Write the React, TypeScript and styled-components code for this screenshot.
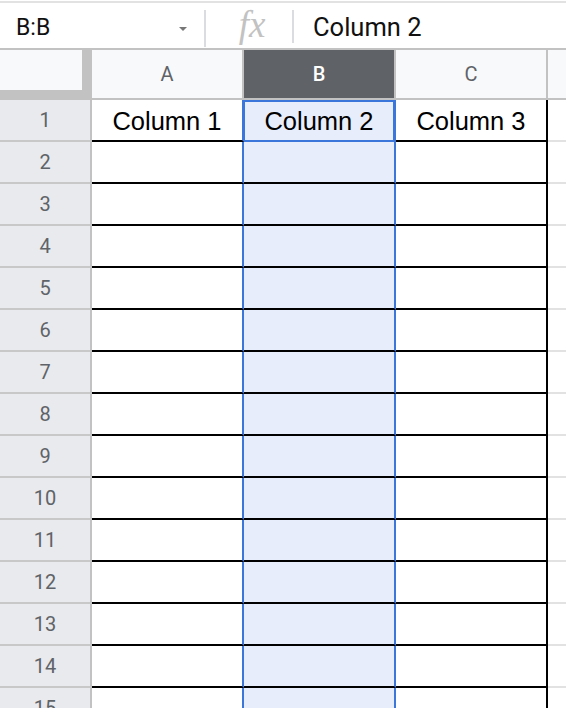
import styled, { createGlobalStyle } from 'styled-components';
import { Fragment } from 'react';

const GlobalStyle = createGlobalStyle`
  html, body {
    margin: 0;
    padding: 0;
    background: #fff;
    overflow: hidden;
  }
  body {
    font-family: Roboto, "Liberation Sans", Arial, sans-serif;
  }
`

const BLUE = '#3b77db';
const GRID_GRAY = '#c2c2c2';

const Page = styled.div`
  width: 566px;
  height: 708px;
  overflow: hidden;
`

const FormulaBar = styled.div`
  margin-top: 1px;
  height: 45px;
  border-top: 2px solid #e2e2e2;
  border-bottom: 2px solid ${GRID_GRAY};
  display: flex;
  align-items: stretch;
`

const NameBox = styled.div`
  width: 204px;
  box-sizing: border-box;
  padding: 4px 17px 0 16px;
  display: flex;
  align-items: center;
  font-size: 23px;
  color: #111;
`

const Caret = styled.span`
  margin-left: auto;
  margin-top: 2px;
  width: 0;
  height: 0;
  border-left: 4px solid transparent;
  border-right: 4px solid transparent;
  border-top: 4px solid #777;
`

const Divider = styled.div<{ $bottom: number }>`
  width: 2px;
  background: #dadce0;
  margin: 7px 0 ${p => p.$bottom}px 0;
`

const FxBox = styled.div`
  width: 86px;
  display: flex;
  align-items: center;
  justify-content: center;
  padding: 0 0 2px 6px;
  box-sizing: border-box;
  font-family: "Liberation Serif", "DejaVu Serif", serif;
  font-style: italic;
  font-size: 37px;
  color: #c2c2c2;
`

const FormulaText = styled.div`
  padding: 2px 0 0 19px;
  display: flex;
  align-items: center;
  font-size: 25.5px;
  color: #111;
`

const Sheet = styled.div`
  display: grid;
  grid-template-columns: 92px 152px 152px 152px 1fr;
  grid-template-rows: 50px;
  grid-auto-rows: 42px;
`

const Corner = styled.div`
  box-sizing: border-box;
  background: #f8f9fa;
  border-right: 10px solid ${GRID_GRAY};
  border-bottom: 10px solid ${GRID_GRAY};
`

const ColHeader = styled.div<{ $selected?: boolean }>`
  box-sizing: border-box;
  display: flex;
  align-items: center;
  justify-content: center;
  background: ${p => (p.$selected ? '#5f6368' : '#f8f9fa')};
  color: ${p => (p.$selected ? '#fff' : '#5f6368')};
  font-weight: ${p => (p.$selected ? 500 : 400)};
  font-size: 20px;
  border-right: 2px solid ${GRID_GRAY};
  border-bottom: 2px solid ${GRID_GRAY};
`

const RowHeader = styled.div`
  box-sizing: border-box;
  display: flex;
  align-items: center;
  justify-content: center;
  background: #e8eaed;
  color: #5f6368;
  font-size: 20px;
  border-right: 2px solid ${GRID_GRAY};
  border-bottom: 2px solid #c8c8c8;
`

const Cell = styled.div<{ $edge: string; $selected?: boolean; $active?: boolean }>`
  box-sizing: border-box;
  display: flex;
  align-items: center;
  justify-content: center;
  padding-top: 2px;
  font-family: "Liberation Sans", Arial, sans-serif;
  font-size: 25.5px;
  color: #000;
  background: ${p => (p.$selected ? '#e8edfb' : '#fff')};
  border-right: 2px solid ${p => p.$edge};
  border-bottom: 2px solid ${p => (p.$active ? BLUE : '#000')};
  box-shadow: ${p => (p.$active ? `inset 0 2px 0 ${BLUE}, inset 1px 0 0 ${BLUE}, inset -1px 0 0 ${BLUE}` : 'none')};
`

const Filler = styled.div<{ $header?: boolean }>`
  box-sizing: border-box;
  background: ${p => (p.$header ? '#f8f9fa' : '#fff')};
  border-bottom: 2px solid ${p => (p.$header ? GRID_GRAY : '#e2e2e2')};
`

const columns = ['A', 'B', 'C'];
const header = ['Column 1', 'Column 2', 'Column 3'];
const rows = Array.from({ length: 15 }, (_, i) => i + 1);

export default function App() {
  return (
    <Page>
      <GlobalStyle />
      <FormulaBar>
        <NameBox>
          B:B
          <Caret />
        </NameBox>
        <Divider $bottom={1} />
        <FxBox>fx</FxBox>
        <Divider $bottom={5} />
        <FormulaText>Column 2</FormulaText>
      </FormulaBar>

      <Sheet>
        <Corner />
        {columns.map(c => (
          <ColHeader key={c} $selected={c === 'B'}>{c}</ColHeader>
        ))}
        <Filler $header />

        {rows.map(r => (
          <Fragment key={r}>
            <RowHeader>{r}</RowHeader>
            {columns.map((c, i) => (
              <Cell
                key={c}
                $edge={i < 2 ? BLUE : '#000'}
                $selected={c === 'B'}
                $active={c === 'B' && r === 1}
              >
                {r === 1 ? header[i] : ''}
              </Cell>
            ))}
            <Filler />
          </Fragment>
        ))}
      </Sheet>
    </Page>
  )
}
